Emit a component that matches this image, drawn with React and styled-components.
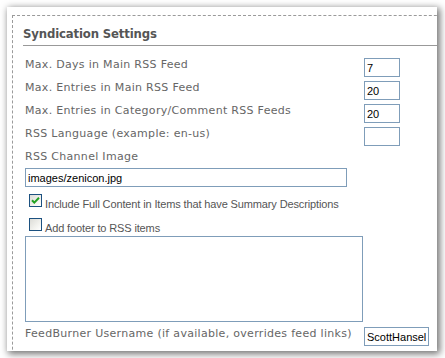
import React from "react";
import styled, { createGlobalStyle } from "styled-components";

const GlobalStyle = createGlobalStyle`
  html, body {
    margin: 0;
    padding: 0;
    background: #fff;
  }
  body {
    padding: 7px;
  }
`;

const Window = styled.div`
  width: 430px;
  height: 344px;
  background: #fff;
  overflow: hidden;
  box-shadow: 2px 2px 7px 1px rgba(0, 0, 0, 0.55);
`;

const Panel = styled.div`
  margin: 8px 0 0 5px;
  width: 460px;
  height: 400px;
  border-left: 1px dashed #9a9a9a;
  border-top: 1px dashed #9a9a9a;
  box-sizing: border-box;
`;

const Heading = styled.h2`
  margin: 10px 0 0 10px;
  padding: 0 0 3px 0;
  font-family: "DejaVu Sans Condensed", "DejaVu Sans", sans-serif;
  font-weight: bold;
  font-size: 13px;
  line-height: 16px;
  letter-spacing: -0.15px;
  color: #555;
  border-bottom: 1px solid #999;
`;

const Body = styled.div`
  padding: 12px 0 0 12px;
  display: flex;
  flex-direction: column;
`;

const Row = styled.div`
  display: flex;
  align-items: flex-start;
  height: 19px;
  margin-bottom: 4px;
`;

const Label = styled.div`
  width: ${(p) => p.$width || "339px"};
  flex: none;
  font-family: "DejaVu Sans", Verdana, sans-serif;
  font-size: 11px;
  line-height: 14px;
  letter-spacing: 0.3px;
  color: #666;
  white-space: nowrap;
`;

const Field = styled.input`
  box-sizing: border-box;
  width: ${(p) => p.$width || "36px"};
  height: 19px;
  margin: 0;
  padding: 0 2px;
  border: 1px solid #7f9db9;
  background: #fff;
  font-family: "Liberation Sans", Tahoma, sans-serif;
  font-size: 11px;
  color: #000;
  outline: none;
`;

const CheckRow = styled.label`
  display: flex;
  align-items: flex-start;
  height: 13px;
  margin: ${(p) => p.$margin || "0"};
  padding-left: 4px;
`;

const Box = styled.span`
  box-sizing: border-box;
  width: 13px;
  height: 13px;
  flex: none;
  border: 1px solid #1c5180;
  background: linear-gradient(135deg, #dcdcd7 0%, #f2f2ee 60%, #fff 100%);
  display: flex;
  align-items: center;
  justify-content: center;
`;

const CheckText = styled.span`
  margin: 4px 0 0 3px;
  font-family: "Liberation Sans", Tahoma, sans-serif;
  font-size: 11px;
  line-height: 13px;
  letter-spacing: -0.13px;
  color: #555;
  white-space: nowrap;
`;

const TextArea = styled.textarea`
  box-sizing: border-box;
  width: 338px;
  height: 86px;
  margin: 5px 0 5px 0;
  border: 1px solid #7f9db9;
  resize: none;
  display: block;
  outline: none;
`;

function Check({ checked }) {
  return (
    <Box>
      {checked && (
        <svg width="9" height="9" viewBox="0 0 9 9">
          <path d="M1 4.2 L3.3 6.6 L8 1.8" fill="none" stroke="#21a121" strokeWidth="2" />
        </svg>
      )}
    </Box>
  );
}

export default function App() {
  return (
    <>
      <GlobalStyle />
      <Window>
        <Panel>
          <Heading>Syndication Settings</Heading>
          <Body>
            <Row>
              <Label>Max. Days in Main RSS Feed</Label>
              <Field defaultValue="7" />
            </Row>
            <Row>
              <Label>Max. Entries in Main RSS Feed</Label>
              <Field defaultValue="20" />
            </Row>
            <Row>
              <Label>Max. Entries in Category/Comment RSS Feeds</Label>
              <Field defaultValue="20" />
            </Row>
            <Row>
              <Label>RSS Language (example: en-us)</Label>
              <Field defaultValue="" />
            </Row>
            <Label>RSS Channel Image</Label>
            <Field $width="322px" defaultValue="images/zenicon.jpg" style={{ marginTop: 4 }} />
            <CheckRow $margin="7px 0 0 0">
              <Check checked />
              <CheckText>Include Full Content in Items that have Summary Descriptions</CheckText>
            </CheckRow>
            <CheckRow $margin="11px 0 0 0">
              <Check />
              <CheckText>Add footer to RSS items</CheckText>
            </CheckRow>
            <TextArea />
            <Row>
              <Label>FeedBurner Username (if available, overrides feed links)</Label>
              <Field $width="65px" defaultValue="ScottHanselman" />
            </Row>
          </Body>
        </Panel>
      </Window>
    </>
  );
}
